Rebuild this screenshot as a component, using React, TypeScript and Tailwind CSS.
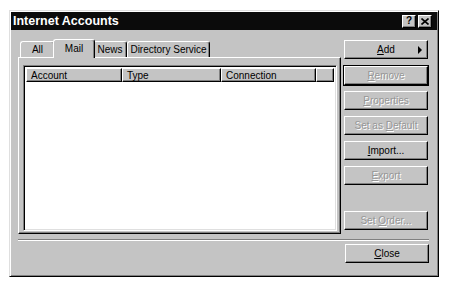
import React from "react";

const font = { fontFamily: '"Liberation Sans", Arial, sans-serif' };

const raised =
  "border border-t-white border-l-white border-r-black border-b-black shadow-[inset_-1px_-1px_0_#808080]";

type BtnProps = {
  label: string;
  u?: number;
  disabled?: boolean;
  outlined?: boolean;
  arrow?: boolean;
  className?: string;
};

const Btn = ({ label, u = 0, disabled, outlined, arrow, className = "" }: BtnProps) => {
  const text = (
    <span>
      {label.slice(0, u)}
      <span className="underline">{label[u]}</span>
      {label.slice(u + 1)}
    </span>
  );
  return (
    <div
      className={`relative w-[84px] h-[19px] flex items-center justify-center text-[10px] bg-[#c4c4c4] ${
        outlined ? "outline outline-1 outline-black" : ""
      } ${raised} ${
        disabled ? "text-[#969696] [text-shadow:1px_1px_0_#fff]" : "text-black"
      } ${className}`}
    >
      {text}
      {arrow && (
        <span className="absolute right-[5px] top-[5px] w-0 h-0 border-y-[4px] border-y-transparent border-l-[4px] border-l-black" />
      )}
    </div>
  );
};

const Tab = ({ label, w, active, className = "" }: { label: string; w: number; active?: boolean; className?: string }) => (
  <div
    style={{ width: w }}
    className={`flex items-center justify-center text-[10px] text-black bg-[#c4c4c4] rounded-t-[3px] border-t border-l border-r border-t-white border-l-white border-r-black shadow-[inset_-1px_0_0_#808080] ${
      active ? "relative z-10 h-[19px] -mb-[1px] -mx-[2px] pb-[2px]" : "h-[16px]"
    } ${className}`}
  >
    {label}
  </div>
);

const App = () => {
  return (
    <div className="w-[450px] h-[287px] bg-white overflow-hidden" style={font}>
      <div className="ml-[9px] mt-[10px] w-[430px] h-[267px] bg-[#c4c4c4] border border-t-[#dfdfdf] border-l-[#dfdfdf] border-r-black border-b-black p-[1px] shadow-[inset_1px_1px_0_#fff,inset_-1px_-1px_0_#808080]">
        {/* title bar */}
        <div className="h-[18px] bg-[#0b0b0b] flex items-center pl-[2px] pr-[5px]">
          <span className="text-white font-bold text-[12.5px]">Internet Accounts</span>
          <div className="ml-auto flex gap-[2px]">
            <div className={`w-[14px] h-[13px] bg-[#c4c4c4] flex items-center justify-center text-[10px] font-bold leading-none ${raised}`}>
              ?
            </div>
            <div className={`w-[14px] h-[13px] bg-[#c4c4c4] flex items-center justify-center ${raised}`}>
              <svg width="8" height="7" viewBox="0 0 8 7">
                <path d="M0.5 0.5 L7.5 6.5 M7.5 0.5 L0.5 6.5" stroke="black" strokeWidth="1.6" />
              </svg>
            </div>
          </div>
        </div>

        {/* body */}
        <div className="px-[7px] pt-[9px]">
          <div className="flex gap-[3px]">
            <div className="w-[323px] flex flex-col">
              <div className="h-[18px] flex items-end pl-[2px]">
                <Tab label="All" w={35} />
                <Tab label="Mail" w={42} active />
                <Tab label="News" w={34} />
                <Tab label="Directory Service" w={83} />
              </div>
              <div className="h-[177px] border border-t-white border-l-white border-r-black border-b-black shadow-[inset_-1px_-1px_0_#808080] pt-[7px] pl-[4px] pr-[3px] pb-[2px]">
                <div className="h-full bg-white border border-t-[#808080] border-l-[#808080] border-r-white border-b-white shadow-[inset_1px_1px_0_#000,inset_-1px_-1px_0_#dfdfdf] p-[2px]">
                  <div className="flex h-[14px] text-[10px] text-black">
                    <div className={`w-[96px] pl-[4px] flex items-center bg-[#c4c4c4] ${raised}`}>Account</div>
                    <div className={`w-[99px] pl-[4px] flex items-center bg-[#c4c4c4] ${raised}`}>Type</div>
                    <div className={`w-[95px] pl-[4px] flex items-center bg-[#c4c4c4] ${raised}`}>Connection</div>
                    <div className={`flex-1 bg-[#c4c4c4] ${raised}`} />
                  </div>
                </div>
              </div>
            </div>

            <div className="w-[84px] flex flex-col pt-[1px]">
              <Btn label="Add" arrow />
              <Btn label="Remove" disabled outlined className="mt-[7px]" />
              <Btn label="Properties" disabled className="mt-[6px]" />
              <Btn label="Set as Default" u={7} disabled className="mt-[6px]" />
              <Btn label="Import..." className="mt-[6px]" />
              <Btn label="Export" disabled className="mt-[6px]" />
              <Btn label="Set Order..." u={4} disabled className="mt-[26px]" />
            </div>
          </div>

          <div className="mt-[5px] mr-[1px] h-[2px] border-t border-t-[#808080] border-b border-b-white" />

          <div className="flex justify-end mt-[3px] pr-[1px]">
            <Btn label="Close" u={0} />
          </div>
        </div>
      </div>
    </div>
  );
};

export default App;
